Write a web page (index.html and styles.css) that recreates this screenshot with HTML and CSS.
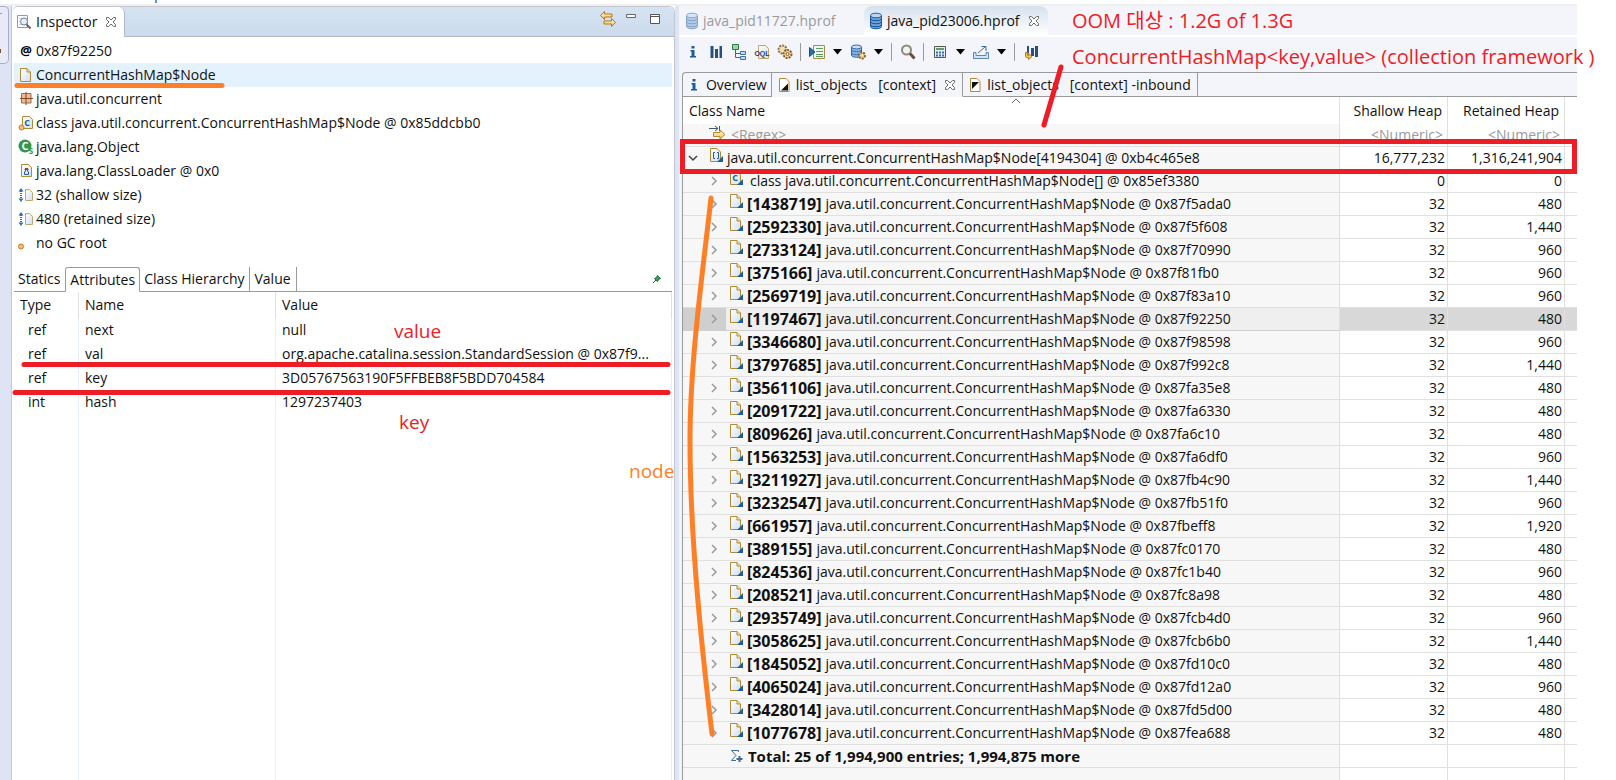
FILE: index.html
```
<!DOCTYPE html>
<html lang="ko">
<head>
<meta charset="utf-8">
<title>Memory Analyzer</title>
<link rel="stylesheet" href="styles.css">
</head>
<body>
<svg class="sprite" aria-hidden="true">
  <defs>
    <linearGradient id="paper" x1="0" y1="0" x2="1" y2="1"><stop offset="0" stop-color="#fff"/><stop offset="1" stop-color="#cfe0f5"/></linearGradient>
    <linearGradient id="gold" x1="0" y1="0" x2="0" y2="1"><stop offset="0" stop-color="#fff6cf"/><stop offset="1" stop-color="#ecc46a"/></linearGradient>
  </defs>
  <symbol id="i-page" viewBox="0 0 16 16"><path d="M2.500 1.500H9l3.500 3.500v9.500h-10z" fill="url(#paper)" stroke="#b08a35"/><path d="M9 1.500V5h3.500" fill="#f3dfa5" stroke="#b08a35"/></symbol>
  <symbol id="i-inspect" viewBox="0 0 16 16"><path d="M1.500 1.500h10v12h-10z" fill="#fff" stroke="#b59a55"/><path d="M3 4.500h7M3 7.500h4M3 10.500h4" stroke="#c6d3e6"/><circle cx="8" cy="7.500" r="3.500" fill="#e6f0fa" stroke="#6e7f99"/><path d="M10.500 10.500l4 4" stroke="#7a5c50" stroke-width="2"/></symbol>
  <symbol id="i-close" viewBox="0 0 12 12"><path d="M1.500 1.500h2L6 4l2.500-2.500h2v2L8 6l2.500 2.500v2h-2L6 8l-2.500 2.500h-2v-2L4 6 1.500 3.500z" fill="#fff" stroke="#6c6c6c"/></symbol>
  <symbol id="i-package" viewBox="0 0 16 16"><path d="M3.500 2.500h9.500v9.500h-9.500z" fill="#e8bf8c" stroke="#a06b4f"/><path d="M8 1v13M2 7.500h13" stroke="#82452f"/></symbol>
  <symbol id="i-loader" viewBox="0 0 16 16"><path d="M3.500 1.500h7l3 3v9h-10z" fill="url(#paper)" stroke="#b08a35"/><path d="M6.500 6.500h4M7.500 6.500v1.500l-1 1v2.500h4V9l-1-1V6.500" fill="#d4e4f4" stroke="#2e5f94"/><path d="M7 5.500h3" stroke="#a33"/></symbol>
  <symbol id="i-size" viewBox="0 0 16 16"><path d="M7.500 2.500h4l3 3v8h-7z" fill="url(#paper)" stroke="#c0a66d"/><path d="M3 4v8" stroke="#2f6fa5" stroke-width="2" stroke-dasharray="1 1"/><path d="M0.500 4.500L3 1l2.500 3.500zM.5 11.500L3 15l2.500-3.500z" fill="#2f6fa5"/></symbol>
  <symbol id="i-gc" viewBox="0 0 16 16"><circle cx="3" cy="11.500" r="2.500" fill="#f6bd72" stroke="#c87a25"/></symbol>
  <symbol id="i-link" viewBox="0 0 18 18"><path d="M5.500 1.500v2.500H13v3H5.500v2.500L1.500 5.500z" fill="url(#gold)" stroke="#b9770e"/><path d="M12.500 8.500V11H5v3h7.500v2.500l4-4z" fill="url(#gold)" stroke="#b9770e"/></symbol>
  <symbol id="i-min" viewBox="0 0 12 12"><path d="M1.500 1.500h9v3h-9z" fill="#fff" stroke="#666"/></symbol>
  <symbol id="i-max" viewBox="0 0 12 12"><path d="M1.500 1.500h9v9h-9zM1 3.500h10" fill="#fff" stroke="#555"/></symbol>
  <symbol id="i-pin" viewBox="0 0 10 10"><path d="M1 9l3-3" stroke="#2b4a3a"/><path d="M2.500 4.500l3 3 1-2 2-1-3-3-1 2z" fill="#3fa05a" stroke="#1f6b36"/></symbol>
  <symbol id="i-db" viewBox="0 0 14 18"><path d="M1.500 3.500v11c0 3 11 3 11 0v-11" fill="#6ea3df" stroke="#235c9e"/><path d="M1.500 6.500c0 3 11 3 11 0M1.500 9.500c0 3 11 3 11 0M1.500 12.500c0 3 11 3 11 0" fill="none" stroke="#174f91"/><ellipse cx="7" cy="3.500" rx="5.500" ry="2.300" fill="#b9d6f5" stroke="#235c9e"/></symbol>
  <symbol id="i-info" viewBox="0 0 16 16"><path d="M6.500 2h3v2.500h-3zM5.500 6h4v6h1.500v1.500h-6V12h1.500V7.500H5.500z" fill="#1c5c9c"/></symbol>
  <symbol id="i-bars" viewBox="0 0 16 16"><path d="M2.500 2h3v12h-3zM7 5h3v9H7zM11.500 2h2.500v12h-2.500z" fill="#27507f"/></symbol>
  <symbol id="i-tree" viewBox="0 0 16 16"><path d="M4.500 6v7.500H10M4.500 9.500H10" fill="none" stroke="#4b6685"/><path d="M1.500 .5h6v5h-6z" fill="#9ad79c" stroke="#2c7d47"/><path d="M9.500 7.500h5v3h-5zM9.500 12.500h5v3h-5z" fill="#c6dcf5" stroke="#3f70a8"/></symbol>
  <symbol id="i-gear" viewBox="0 0 16 16"><circle cx="5.500" cy="5.500" r="4" fill="#f1dfb5" stroke="#967046" stroke-width="2" stroke-dasharray="2 1"/><circle cx="10.500" cy="10" r="4" fill="#f3d99b" stroke="#8a5f30" stroke-width="2" stroke-dasharray="2 1"/><circle cx="10.500" cy="10" r="1.500" fill="#fff" stroke="#8a5f30"/></symbol>
  <symbol id="i-run" viewBox="0 0 16 16"><path d="M4.500 1.500h11v13h-11z" fill="#eef7e9" stroke="#a88c45"/><path d="M7 4.500h7M7 7.500h7M7 10.500h7M7 12.500h7" stroke="#5c9b69"/><path d="M.5 3.500L6 8l-5.500 4.500z" fill="#2c6ea5" stroke="#1b4d7c"/></symbol>
  <symbol id="i-dbgear" viewBox="0 0 16 16"><path d="M1.500 3v8c0 3 10 3 10 0V3" fill="#8cb7e8" stroke="#2c67a9"/><path d="M1.500 5.500c0 3 10 3 10 0M1.500 8.500c0 3 10 3 10 0" fill="none" stroke="#2c67a9"/><ellipse cx="6.500" cy="3" rx="5" ry="2" fill="#c8dff6" stroke="#2c67a9"/><circle cx="12" cy="11.500" r="3" fill="#f3d99b" stroke="#8a5f30" stroke-width="2" stroke-dasharray="2 1"/></symbol>
  <symbol id="i-find" viewBox="0 0 16 16"><circle cx="6.500" cy="6" r="4.500" fill="#eef4f6" stroke="#8d8878" stroke-width="2"/><path d="M10 9.500l4.500 5" stroke="#6d4c40" stroke-width="3"/></symbol>
  <symbol id="i-calc" viewBox="0 0 16 16"><path d="M2.500 2.500h11v11h-11z" fill="#e5eef8" stroke="#555a4a"/><path d="M4 5h8" stroke="#5e9a6e" stroke-width="2"/><path d="M4 8.500h8M4 11.500h8" stroke="#3a6fa5" stroke-width="2" stroke-dasharray="2 1"/></symbol>
  <symbol id="i-export" viewBox="0 0 16 16"><path d="M3 8.500H.5v6h15v-6H13v3H3z" fill="#d4e4f4" stroke="#5c86b5"/><path d="M5 9l7-6M8.500 2.500h4.500V7" fill="none" stroke="#376ba3"/></symbol>
  <symbol id="i-compare" viewBox="0 0 16 16"><path d="M4 2h2v7H4zM8 4h3v8H8zM12 2h3v11h-3z" fill="#27507f"/><path d="M2.500 8.500v4c0 1 1 1 3 1v2l3.500-3-3.500-3v2h-1v-3z" fill="#f2ca60" stroke="#b9770e"/></symbol>
  <symbol id="i-out" viewBox="0 0 12 16"><path d="M1.500 1.500H8l3 3v10h-9.500z" fill="#fff" stroke="#b08a35"/><path d="M10 6.500v7H3z" fill="#111"/></symbol>
  <symbol id="i-in" viewBox="0 0 12 16"><path d="M1.500 1.500H8l3 3v10h-9.500z" fill="#fff" stroke="#b08a35"/><path d="M3 5h7l-7 7z" fill="#111"/></symbol>
  <symbol id="i-filter" viewBox="0 0 18 16"><path d="M0 3.500h9M6 1l3 2.500L6 6M10.500 1v5" fill="none" stroke="#44596b"/><path d="M4.500 7.500H11V5l5 4.500-5 4.500v-2.500H4.500z" fill="url(#gold)" stroke="#b08a35"/></symbol>
  <symbol id="i-obj" viewBox="0 0 16 16"><path d="M1.500 1.500H8l3.500 3.500v9.500h-10z" fill="url(#paper)" stroke="#b08a35"/><path d="M8 1.500V5h3.500" fill="#f3dfa5" stroke="#b08a35"/><path d="M14 9v6H8z" fill="#1f5d9b"/></symbol>
  <symbol id="i-array" viewBox="0 0 16 16"><path d="M1.500 1.500H8l3.500 3.500v9.500h-10z" fill="url(#paper)" stroke="#b08a35"/><path d="M6 5.500H4.500v6H6M8 5.500h1.500v6H8" fill="none" stroke="#1f5d9b"/><path d="M14 9v6H8z" fill="#1f5d9b"/></symbol>
  <symbol id="i-sigma" viewBox="0 0 16 16"><path d="M9.500 4V2.500h-7L7 7.500l-4.500 5H7" fill="none" stroke="#3b6c9e"/><path d="M10.500 8v6M7.500 11h6" stroke="#3b6c9e" stroke-width="2"/></symbol>
  <symbol id="i-right" viewBox="0 0 8 10"><path d="M2 1l4 4-4 4" fill="none" stroke="#9a9a9a" stroke-width="1.500"/></symbol>
  <symbol id="i-down" viewBox="0 0 10 8"><path d="M1 2l4 4 4-4" fill="none" stroke="#444" stroke-width="1.500"/></symbol>
  <symbol id="i-up" viewBox="0 0 10 6"><path d="M1 5l4-4 4 4" fill="none" stroke="#666"/></symbol>
  <symbol id="i-menu" viewBox="0 0 9 6"><path d="M0 0h9L4.500 5.500z" fill="#000"/></symbol>
</svg>

<div class="topline"><span class="tick"></span></div>
<div class="workbench">
  <div class="sidebar"><div class="stack"><span></span><span></span></div></div>

  <section class="inspector">
    <header class="view-bar">
      <div class="view-tab"><svg class="ic"><use href="#i-inspect"/></svg><span>Inspector</span><button class="close" aria-label="Close Inspector"><svg><use href="#i-close"/></svg></button></div>
      <div class="view-tools">
        <button class="wide" aria-label="Link with snapshot"><svg><use href="#i-link"/></svg></button>
        <button aria-label="Minimize"><svg><use href="#i-min"/></svg></button>
        <button aria-label="Maximize"><svg><use href="#i-max"/></svg></button>
      </div>
    </header>
    <ul class="facts">
      <li><svg viewBox="0 0 16 16"><text x="8" y="12" text-anchor="middle" class="g-at">@</text></svg>0x87f92250</li>
      <li class="chosen"><svg class="ic"><use href="#i-page"/></svg>ConcurrentHashMap$Node</li>
      <li><svg class="ic"><use href="#i-package"/></svg>java.util.concurrent</li>
      <li><svg viewBox="0 0 16 16"><path d="M4.500 1.500h7l3 3v9h-10z" fill="url(#paper)" stroke="#b08a35"/><text x="9" y="11" text-anchor="middle" class="g-c">C</text><circle cx="3.500" cy="12.500" r="2.500" fill="#f6bd72" stroke="#c87a25"/></svg>class java.util.concurrent.ConcurrentHashMap$Node @ 0x85ddcbb0</li>
      <li><svg viewBox="0 0 16 16"><circle cx="7" cy="7" r="6.500" fill="#33964a"/><text x="7" y="11" text-anchor="middle" class="g-cw">C</text><text x="13" y="15" text-anchor="middle" class="g-s">S</text></svg>java.lang.Object</li>
      <li><svg class="ic"><use href="#i-loader"/></svg>java.lang.ClassLoader @ 0x0</li>
      <li><svg class="ic"><use href="#i-size"/></svg>32 (shallow size)</li>
      <li><svg class="ic"><use href="#i-size"/></svg>480 (retained size)</li>
      <li><svg class="ic"><use href="#i-gc"/></svg>no GC root</li>
    </ul>
    <nav class="detail-tabs">
      <button>Statics</button><button class="on">Attributes</button><button class="sep">Class Hierarchy</button><button class="sep">Value</button>
      <button class="pin" aria-label="Pin tab"><svg><use href="#i-pin"/></svg></button>
    </nav>
    <table class="attrs">
      <colgroup><col class="c-type"><col class="c-name"><col></colgroup>
      <thead><tr><th>Type</th><th>Name</th><th>Value</th></tr></thead>
      <tbody>
        <tr><td>ref</td><td>next</td><td>null</td></tr>
        <tr><td>ref</td><td>val</td><td>org.apache.catalina.session.StandardSession @ 0x87f9...</td></tr>
        <tr><td>ref</td><td>key</td><td>3D05767563190F5FFBEB8F5BDD704584</td></tr>
        <tr><td>int</td><td>hash</td><td>1297237403</td></tr>
        <tr class="rest"><td></td><td></td><td></td></tr>
      </tbody>
    </table>
  </section>

  <section class="editor">
    <header class="file-tabs">
      <div class="file-tab faded"><svg class="db"><use href="#i-db"/></svg><span>java_pid11727.hprof</span></div>
      <div class="file-tab open"><svg class="db"><use href="#i-db"/></svg><span>java_pid23006.hprof</span><button class="close" aria-label="Close file"><svg><use href="#i-close"/></svg></button></div>
    </header>
    <div class="toolbar">
      <button aria-label="Overview"><svg><use href="#i-info"/></svg></button>
      <button aria-label="Histogram"><svg><use href="#i-bars"/></svg></button>
      <button aria-label="Dominator tree"><svg><use href="#i-tree"/></svg></button>
      <button aria-label="OQL"><svg viewBox="0 0 16 16"><path d="M4.500 1.500h7l3 3v10h-10z" fill="url(#paper)" stroke="#c0a66d"/><text x="8" y="12" text-anchor="middle" class="g-oql">OQL</text></svg></button>
      <button aria-label="Thread overview"><svg><use href="#i-gear"/></svg></button>
      <i></i>
      <button aria-label="Run report"><svg><use href="#i-run"/></svg></button>
      <button class="drop" aria-label="Report menu"><svg><use href="#i-menu"/></svg></button>
      <button aria-label="Query browser"><svg><use href="#i-dbgear"/></svg></button>
      <button class="drop" aria-label="Query menu"><svg><use href="#i-menu"/></svg></button>
      <i></i>
      <button aria-label="Find"><svg><use href="#i-find"/></svg></button>
      <i></i>
      <button aria-label="Calculate retained size"><svg><use href="#i-calc"/></svg></button>
      <button class="drop" aria-label="Calculate menu"><svg><use href="#i-menu"/></svg></button>
      <button aria-label="Export"><svg><use href="#i-export"/></svg></button>
      <button class="drop" aria-label="Export menu"><svg><use href="#i-menu"/></svg></button>
      <i></i>
      <button aria-label="Compare"><svg><use href="#i-compare"/></svg></button>
    </div>
    <div class="folder">
      <nav class="page-tabs">
        <button class="page-tab"><svg class="ic"><use href="#i-info"/></svg>Overview</button>
        <button class="page-tab on"><svg class="pg"><use href="#i-out"/></svg>list_objects&nbsp;&nbsp; [context]<svg class="x"><use href="#i-close"/></svg></button>
        <button class="page-tab"><svg class="pg"><use href="#i-in"/></svg>list_objects&nbsp;&nbsp; [context] -inbound</button>
        <span class="fill"></span>
      </nav>
      <table class="heap">
        <colgroup><col><col class="c-sh"><col class="c-rh"><col class="c-end"></colgroup>
        <thead>
          <tr><th>Class Name<svg class="sort"><use href="#i-up"/></svg></th><th>Shallow Heap</th><th>Retained Heap</th><th></th></tr>
        </thead>
        <tbody>
          <tr class="filter"><td><div class="cell"><svg class="fi"><use href="#i-filter"/></svg>&lt;Regex&gt;</div></td><td>&lt;Numeric&gt;</td><td>&lt;Numeric&gt;</td><td></td></tr>
          <tr class="root"><td><div class="cell"><svg class="tw"><use href="#i-down"/></svg><svg class="ob"><use href="#i-array"/></svg>java.util.concurrent.ConcurrentHashMap$Node[4194304] @ 0xb4c465e8</div></td><td>16,777,232</td><td>1,316,241,904</td><td></td></tr>
          <tr class="cls"><td><div class="cell"><svg class="tw"><use href="#i-right"/></svg><svg class="ob" viewBox="0 0 16 16"><path d="M1.500 1.500H8l3.500 3.500v9.500h-10z" fill="url(#paper)" stroke="#b08a35"/><text x="6" y="11" text-anchor="middle" class="g-c">C</text><path d="M14 9v6H8z" fill="#1f5d9b"/></svg>class java.util.concurrent.ConcurrentHashMap$Node[] @ 0x85ef3380</div></td><td>0</td><td>0</td><td></td></tr>
          <tr><td><div class="cell"><svg class="tw"><use href="#i-right"/></svg><svg class="ob"><use href="#i-obj"/></svg><b>[1438719]</b>java.util.concurrent.ConcurrentHashMap$Node @ 0x87f5ada0</div></td><td>32</td><td>480</td><td></td></tr>
          <tr><td><div class="cell"><svg class="tw"><use href="#i-right"/></svg><svg class="ob"><use href="#i-obj"/></svg><b>[2592330]</b>java.util.concurrent.ConcurrentHashMap$Node @ 0x87f5f608</div></td><td>32</td><td>1,440</td><td></td></tr>
          <tr><td><div class="cell"><svg class="tw"><use href="#i-right"/></svg><svg class="ob"><use href="#i-obj"/></svg><b>[2733124]</b>java.util.concurrent.ConcurrentHashMap$Node @ 0x87f70990</div></td><td>32</td><td>960</td><td></td></tr>
          <tr><td><div class="cell"><svg class="tw"><use href="#i-right"/></svg><svg class="ob"><use href="#i-obj"/></svg><b>[375166]</b>java.util.concurrent.ConcurrentHashMap$Node @ 0x87f81fb0</div></td><td>32</td><td>960</td><td></td></tr>
          <tr><td><div class="cell"><svg class="tw"><use href="#i-right"/></svg><svg class="ob"><use href="#i-obj"/></svg><b>[2569719]</b>java.util.concurrent.ConcurrentHashMap$Node @ 0x87f83a10</div></td><td>32</td><td>960</td><td></td></tr>
          <tr class="picked"><td><div class="cell"><svg class="tw"><use href="#i-right"/></svg><svg class="ob"><use href="#i-obj"/></svg><b>[1197467]</b>java.util.concurrent.ConcurrentHashMap$Node @ 0x87f92250</div></td><td>32</td><td>480</td><td></td></tr>
          <tr><td><div class="cell"><svg class="tw"><use href="#i-right"/></svg><svg class="ob"><use href="#i-obj"/></svg><b>[3346680]</b>java.util.concurrent.ConcurrentHashMap$Node @ 0x87f98598</div></td><td>32</td><td>960</td><td></td></tr>
          <tr><td><div class="cell"><svg class="tw"><use href="#i-right"/></svg><svg class="ob"><use href="#i-obj"/></svg><b>[3797685]</b>java.util.concurrent.ConcurrentHashMap$Node @ 0x87f992c8</div></td><td>32</td><td>1,440</td><td></td></tr>
          <tr><td><div class="cell"><svg class="tw"><use href="#i-right"/></svg><svg class="ob"><use href="#i-obj"/></svg><b>[3561106]</b>java.util.concurrent.ConcurrentHashMap$Node @ 0x87fa35e8</div></td><td>32</td><td>480</td><td></td></tr>
          <tr><td><div class="cell"><svg class="tw"><use href="#i-right"/></svg><svg class="ob"><use href="#i-obj"/></svg><b>[2091722]</b>java.util.concurrent.ConcurrentHashMap$Node @ 0x87fa6330</div></td><td>32</td><td>480</td><td></td></tr>
          <tr><td><div class="cell"><svg class="tw"><use href="#i-right"/></svg><svg class="ob"><use href="#i-obj"/></svg><b>[809626]</b>java.util.concurrent.ConcurrentHashMap$Node @ 0x87fa6c10</div></td><td>32</td><td>480</td><td></td></tr>
          <tr><td><div class="cell"><svg class="tw"><use href="#i-right"/></svg><svg class="ob"><use href="#i-obj"/></svg><b>[1563253]</b>java.util.concurrent.ConcurrentHashMap$Node @ 0x87fa6df0</div></td><td>32</td><td>960</td><td></td></tr>
          <tr><td><div class="cell"><svg class="tw"><use href="#i-right"/></svg><svg class="ob"><use href="#i-obj"/></svg><b>[3211927]</b>java.util.concurrent.ConcurrentHashMap$Node @ 0x87fb4c90</div></td><td>32</td><td>1,440</td><td></td></tr>
          <tr><td><div class="cell"><svg class="tw"><use href="#i-right"/></svg><svg class="ob"><use href="#i-obj"/></svg><b>[3232547]</b>java.util.concurrent.ConcurrentHashMap$Node @ 0x87fb51f0</div></td><td>32</td><td>960</td><td></td></tr>
          <tr><td><div class="cell"><svg class="tw"><use href="#i-right"/></svg><svg class="ob"><use href="#i-obj"/></svg><b>[661957]</b>java.util.concurrent.ConcurrentHashMap$Node @ 0x87fbeff8</div></td><td>32</td><td>1,920</td><td></td></tr>
          <tr><td><div class="cell"><svg class="tw"><use href="#i-right"/></svg><svg class="ob"><use href="#i-obj"/></svg><b>[389155]</b>java.util.concurrent.ConcurrentHashMap$Node @ 0x87fc0170</div></td><td>32</td><td>480</td><td></td></tr>
          <tr><td><div class="cell"><svg class="tw"><use href="#i-right"/></svg><svg class="ob"><use href="#i-obj"/></svg><b>[824536]</b>java.util.concurrent.ConcurrentHashMap$Node @ 0x87fc1b40</div></td><td>32</td><td>960</td><td></td></tr>
          <tr><td><div class="cell"><svg class="tw"><use href="#i-right"/></svg><svg class="ob"><use href="#i-obj"/></svg><b>[208521]</b>java.util.concurrent.ConcurrentHashMap$Node @ 0x87fc8a98</div></td><td>32</td><td>480</td><td></td></tr>
          <tr><td><div class="cell"><svg class="tw"><use href="#i-right"/></svg><svg class="ob"><use href="#i-obj"/></svg><b>[2935749]</b>java.util.concurrent.ConcurrentHashMap$Node @ 0x87fcb4d0</div></td><td>32</td><td>960</td><td></td></tr>
          <tr><td><div class="cell"><svg class="tw"><use href="#i-right"/></svg><svg class="ob"><use href="#i-obj"/></svg><b>[3058625]</b>java.util.concurrent.ConcurrentHashMap$Node @ 0x87fcb6b0</div></td><td>32</td><td>1,440</td><td></td></tr>
          <tr><td><div class="cell"><svg class="tw"><use href="#i-right"/></svg><svg class="ob"><use href="#i-obj"/></svg><b>[1845052]</b>java.util.concurrent.ConcurrentHashMap$Node @ 0x87fd10c0</div></td><td>32</td><td>480</td><td></td></tr>
          <tr><td><div class="cell"><svg class="tw"><use href="#i-right"/></svg><svg class="ob"><use href="#i-obj"/></svg><b>[4065024]</b>java.util.concurrent.ConcurrentHashMap$Node @ 0x87fd12a0</div></td><td>32</td><td>960</td><td></td></tr>
          <tr><td><div class="cell"><svg class="tw"><use href="#i-right"/></svg><svg class="ob"><use href="#i-obj"/></svg><b>[3428014]</b>java.util.concurrent.ConcurrentHashMap$Node @ 0x87fd5d00</div></td><td>32</td><td>480</td><td></td></tr>
          <tr><td><div class="cell"><svg class="tw"><use href="#i-right"/></svg><svg class="ob"><use href="#i-obj"/></svg><b>[1077678]</b>java.util.concurrent.ConcurrentHashMap$Node @ 0x87fea688</div></td><td>32</td><td>480</td><td></td></tr>
          <tr class="total"><td><div class="cell"><svg class="ob"><use href="#i-sigma"/></svg><b>Total: 25 of 1,994,900 entries; 1,994,875 more</b></div></td><td></td><td></td><td></td></tr>
          <tr class="rest"><td></td><td></td><td></td><td></td></tr>
        </tbody>
      </table>
    </div>
  </section>
</div>

<div class="notes">
  <svg class="ink" aria-hidden="true">
    <path class="orange" d="M17 85.500H222"/>
    <path class="red" d="M24 364.500H668"/>
    <path class="red" d="M15 392.500H668"/>
    <path class="red" d="M1061 67L1044 125"/>
    <path class="orange" d="M711 198C703 270 690 360 690 440C690 540 702 650 712 734"/>
    <rect class="frame" x="682.500" y="141.500" width="892" height="30"/>
  </svg>
  <p class="note n-value">value</p>
  <p class="note n-key">key</p>
  <p class="note n-node">node</p>
  <p class="note big n-oom">OOM 대상 : 1.2G of 1.3G</p>
  <p class="note big n-map">ConcurrentHashMap&lt;key,value&gt; (collection framework )</p>
</div>
</body>
</html>
```
FILE: styles.css
```
* { box-sizing: border-box; }
html, body { height: 100%; }
body {
  margin: 0;
  position: relative;
  display: flex;
  flex-direction: column;
  overflow: hidden;
  background: #fff;
  color: #111;
  font: 14px/20px "Open Sans", "Noto Sans CJK KR", sans-serif;
}
.sprite { position: absolute; width: 0; height: 0; }
svg { display: block; flex: none; width: 16px; height: 16px; }
button { display: flex; align-items: center; margin: 0; padding: 0; border: 0; background: none; color: inherit; font: inherit; }
table { width: 100%; border-collapse: separate; border-spacing: 0; table-layout: fixed; }
th, td { padding: 0; font-weight: 400; text-align: left; white-space: nowrap; overflow: hidden; }

.g-at { font: bold 13px "Open Sans", sans-serif; }
.facts svg { overflow: visible; }
.g-c { font: bold 9px "Open Sans", sans-serif; fill: #1f5d9b; }
.g-cw { font: bold 11px "Open Sans", sans-serif; fill: #fff; }
.g-s { font: bold 8px "Open Sans", sans-serif; fill: #33964a; }
.g-oql { font: bold 7px "Liberation Sans", sans-serif; fill: #27406a; }

.topline { flex: none; height: 6px; margin-right: 39px; padding-left: 155px; border-bottom: 2px solid #efefef; }
.tick { display: block; width: 2px; height: 3px; background: #5b96cf; border-left: 1px solid #a9855a; }
.workbench { flex: 1; min-height: 0; display: flex; padding-right: 39px; }
.sidebar { flex: none; width: 12px; padding-right: 2px; background: #dfe4f4; border-right: 1px solid #c6c8d4; }
.stack { display: flex; flex-direction: column; justify-content: space-between; align-items: flex-start; height: 58px; padding: 6px 0 10px; background: #e8ebf7; border: solid #a9b0c6; border-width: 1px 1px 1px 0; border-radius: 0 5px 5px 0; }
.stack span { width: 2px; height: 1px; background: #b09a78; }
.stack span:last-child { width: 1px; height: 4px; background: #7b5a2a; }

.inspector { flex: 663 1 0; min-width: 0; display: flex; flex-direction: column; padding: 0 2px; border: solid #c3c6cc; border-width: 1px 1px 0 0; border-radius: 6px 6px 0 0; }
.view-bar { flex: none; display: flex; justify-content: space-between; height: 30px; margin: 0 -2px; background: linear-gradient(#d5e3f1, #ccdbec); border-bottom: 1px solid #b0b8cc; border-radius: 6px 6px 0 0; }
.view-tab { display: flex; align-items: center; height: 30px; padding: 0 7px 0 4px; gap: 4px; background: #fff; border-right: 1px solid #b0b8cc; border-radius: 6px 6px 0 0; }
.view-tab .close { margin-left: 4px; }
.close svg, .x { width: 12px; height: 12px; }
.view-tools { display: flex; gap: 12px; padding: 6px 13px 0 0; align-items: flex-start; }
.view-tools svg { width: 12px; height: 12px; }
.view-tools .wide { margin: -3px -4px 0 0; }
.view-tools .wide svg { width: 18px; height: 18px; }

.facts { margin: 0; padding: 2px 0 0; list-style: none; }
.facts li { display: flex; align-items: center; gap: 2px; height: 24px; padding-left: 4px; }
.facts .chosen { background: #e4f2fd; }

.detail-tabs { flex: none; display: flex; align-items: stretch; height: 25px; margin-top: 12px; }
.detail-tabs button { padding: 0 4px; border-bottom: 1px solid #9a9a9a; }
.detail-tabs button:first-child { padding-right: 5px; }
.detail-tabs .on { border: 1px solid #9a9a9a; border-bottom-color: #fff; border-radius: 3px 3px 0 0; }
.detail-tabs .sep { padding-right: 5px; border-right: 1px solid #9a9a9a; }
.detail-tabs .pin { flex: 1; justify-content: flex-end; padding-right: 10px; }
.pin svg { width: 10px; height: 10px; }

.attrs { flex: 1; height: 100px; }
.attrs .c-type { width: 65px; }
.attrs .c-name { width: 197px; }
.attrs th { height: 26px; padding-left: 6px; border-right: 1px solid #e0e0e0; }
.attrs td { height: 24px; padding-left: 6px; border-right: 1px solid #e6eef8; }
.attrs td:first-child { padding-left: 14px; }
.attrs .rest td { height: auto; }

.editor { flex: 902 1 0; min-width: 0; display: flex; flex-direction: column; padding-left: 3px; background: #f4f5fb; border-left: 4px solid #dfe4f4; }
.file-tabs { flex: none; display: flex; height: 31px; margin-left: -3px; padding-left: 1px; border-bottom: 2px solid #fff; }
.file-tab { display: flex; align-items: center; gap: 4px; padding: 0 8px 0 5px; border-radius: 8px 8px 0 0; }
.file-tab .db { width: 14px; height: 18px; }
.file-tab .close { margin-left: 4px; }
.faded { width: 184px; color: #9a9a9a; }
.faded svg { opacity: .5; }
.open { background: linear-gradient(#d6e1ee, #fff); }
.toolbar { flex: none; display: flex; align-items: center; gap: 7px; height: 35px; padding: 0 0 6px 3px; }
.toolbar i { width: 1px; height: 18px; margin-right: 1px; background: #9a9a9a; }
.toolbar .drop { justify-content: center; width: 11px; }
.toolbar .drop svg { width: 9px; height: 6px; }

.folder { flex: 1; min-height: 0; display: flex; flex-direction: column; border: solid #9a9a9a; border-width: 1px 0 0 1px; border-top-left-radius: 4px; }
.page-tabs { flex: none; display: flex; height: 24px; }
.page-tab, .fill { border-bottom: 1px solid #9a9a9a; }
.page-tab { gap: 6px; padding: 0 6px; border-right: 1px solid #9a9a9a; }
.page-tab:first-child { gap: 4px; padding: 0 4px 0 3px; }
.page-tab .pg { width: 12px; }
.page-tab.on { border-bottom-color: transparent; }
.page-tab .x { margin-left: 2px; }
.fill { flex: 1; }

.heap { background: #fff; }
.heap .c-sh { width: 108px; }
.heap .c-rh { width: 117px; }
.heap .c-end { width: 12px; }
.heap th { position: relative; height: 27px; padding: 0 5px; border-right: 1px solid #e0e0e0; text-align: right; }
.heap th:first-child { padding-left: 6px; text-align: left; }
.sort { position: absolute; top: 1px; left: 50%; width: 10px; height: 6px; }
.heap td { height: 23px; padding-right: 2px; border: solid #e0e0e0; border-width: 0 1px 1px 0; text-align: right; }
.heap td:first-child { background: #f7f7f7; }
.heap th:last-child, .heap td:last-child { border-right: 0; }
.cell { display: flex; align-items: center; height: 22px; padding-left: 27px; }
.cell .tw { width: 8px; height: 10px; margin-right: 11px; }
.cell .ob { margin: 0 2px 6px 0; }
.cell b { margin-right: 4px; font-size: 16px; }
.cls .ob { margin-right: 5px; }
.root .cell { padding-left: 5px; }
.root .tw { width: 10px; height: 8px; }
.filter td { color: #9a9a9a; padding-right: 4px; }
.filter .cell { padding-left: 26px; gap: 4px; }
.filter .fi { width: 18px; margin-bottom: 4px; }
.total .cell { padding-left: 46px; }
.total .ob { margin: 0 3px 0 0; }
.total b { font-size: 15px; }
.picked td { background: #d8d8d8; }
.picked td:first-child { background: linear-gradient(90deg, #cfcfcf 43px, #efefef 43px); border-bottom-color: #cfcfcf; }
.heap .rest td { height: 23px; }

.notes { position: absolute; inset: 0; pointer-events: none; }
.ink { width: 100%; height: 100%; fill: none; stroke-width: 5; stroke-linecap: round; }
.red { stroke: #ee1c24; }
.orange { stroke: #ff7f27; }
.frame { stroke: #ee1c24; }
.note { position: absolute; margin: 0; font-size: 19px; line-height: 28px; white-space: nowrap; color: #ee1c24; }
.big { font-size: 20px; }
.n-value { left: 394px; top: 317px; }
.n-key { left: 399px; top: 408px; }
.n-node { left: 629px; top: 457px; color: #ff7f27; }
.n-oom { left: 1072px; top: 7px; }
.n-map { left: 1072px; top: 43px; }
```
